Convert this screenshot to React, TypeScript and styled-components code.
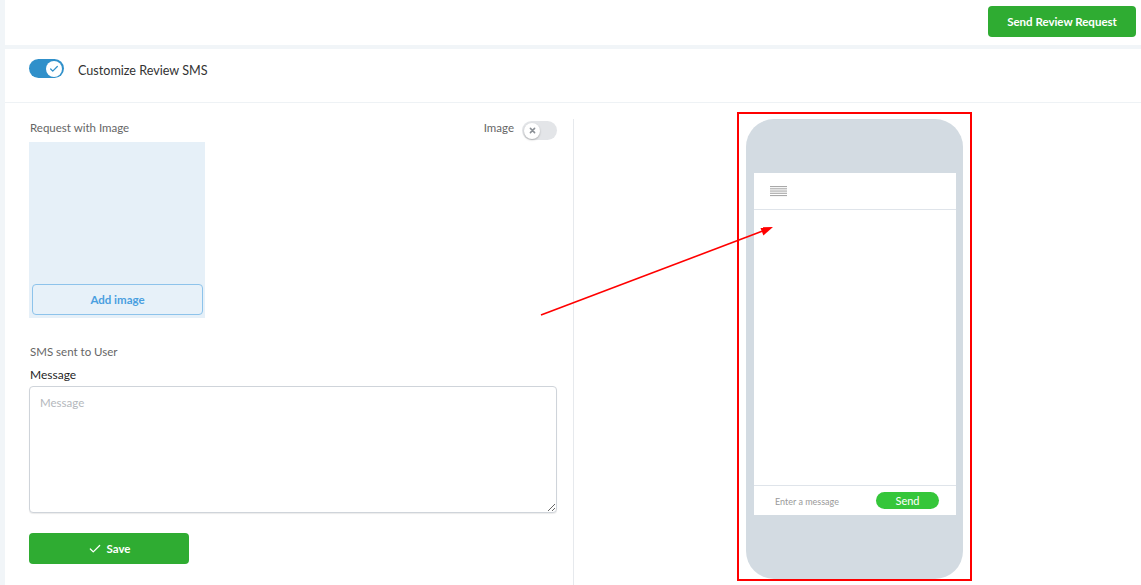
import React from "react";
import styled, { createGlobalStyle } from "styled-components";

const GlobalStyle = createGlobalStyle`
  html, body { margin: 0; padding: 0; }
  body {
    background: #f1f5f8;
    font-family: Lato, "Open Sans", Arial, sans-serif;
    color: #333;
  }
  * { box-sizing: border-box; }
`;

const Page = styled.div`
  position: relative;
  height: 585px;
  padding-left: 5px;
  display: flex;
  flex-direction: column;
  gap: 4px;
  overflow: hidden;
`;

const TopBar = styled.div`
  height: 45px;
  flex: none;
  background: #fff;
  display: flex;
  justify-content: flex-end;
  align-items: flex-start;
  padding: 6px 5px 0 0;
`;

const GreenButton = styled.button<{ $w: number }>`
  width: ${(p) => p.$w}px;
  height: 31px;
  border: none;
  border-radius: 4px;
  background: #2fac32;
  color: #fff;
  font-family: Lato, "Open Sans", sans-serif;
  font-weight: 700;
  font-size: 11.5px;
  display: flex;
  align-items: center;
  justify-content: center;
  gap: 5px;
  cursor: pointer;
  padding: 0;
`;

const Card = styled.div`
  flex: 1;
  background: #fff;
  display: flex;
  flex-direction: column;
`;

const CardHeader = styled.div`
  height: 54px;
  flex: none;
  display: flex;
  align-items: center;
  gap: 14px;
  padding: 0 0 14px 24px;
  border-bottom: 1px solid #eef2f5;
`;

const HeaderTitle = styled.span`
  font-size: 12.6px;
  color: #333;
  padding-top: 3px;
`;

const Switch = styled.div<{ $on: boolean }>`
  width: 35px;
  height: 19px;
  border-radius: 10px;
  background: ${(p) => (p.$on ? "#3090ca" : "#e3e5e8")};
  display: flex;
  align-items: center;
  justify-content: ${(p) => (p.$on ? "flex-end" : "flex-start")};
  padding: 0 2px;
  flex: none;
`;

const Knob = styled.div<{ $on: boolean }>`
  width: 16px;
  height: 16px;
  border-radius: 50%;
  background: #fff;
  display: flex;
  align-items: center;
  justify-content: center;
  box-shadow: ${(p) => (p.$on ? "none" : "0 1px 2px rgba(0,0,0,0.25)")};
`;

const CardBody = styled.div`
  flex: 1;
  display: flex;
`;

const LeftCol = styled.div`
  width: 569px;
  flex: none;
  margin-top: 16px;
  padding: 2px 16px 0 24px;
  border-right: 1px solid #e6e9ed;
  display: flex;
  flex-direction: column;
`;

const TopRow = styled.div`
  display: flex;
  justify-content: space-between;
  align-items: flex-start;
  height: 19px;
`;

const SmallLabel = styled.span`
  font-size: 11.5px;
  line-height: 13px;
  color: #666;
  padding-left: 1px;
`;

const ImageToggleGroup = styled.div`
  display: flex;
  align-items: flex-start;
  gap: 8px;
`;

const ImageBox = styled.div`
  margin-top: 2px;
  width: 176px;
  height: 176px;
  background: #e6f0f8;
  display: flex;
  align-items: flex-end;
  padding: 0 2px 3px 3px;
`;

const AddImageButton = styled.button`
  width: 100%;
  height: 31px;
  border: 1px solid #8dc3eb;
  border-radius: 4px;
  background: #e7f1f9;
  color: #4a9fe0;
  font-family: Lato, "Open Sans", sans-serif;
  font-weight: 700;
  font-size: 11.5px;
  padding: 0;
`;

const SectionLabel = styled.div<{ $mt: number; $dark?: boolean }>`
  margin-top: ${(p) => p.$mt}px;
  font-size: ${(p) => (p.$dark ? 12 : 11.5)}px;
  line-height: 14px;
  color: ${(p) => (p.$dark ? "#1f1f1f" : "#666")};
  padding-left: 1px;
`;

const MessageArea = styled.textarea`
  margin-top: 4px;
  width: 100%;
  height: 127px;
  border: 1px solid #cfd4da;
  border-radius: 4px;
  box-shadow: 0 1px 1px rgba(0, 0, 0, 0.08);
  padding: 9px 10px;
  font-family: Lato, "Open Sans", sans-serif;
  font-size: 11.5px;
  color: #333;
  resize: vertical;
  outline: none;
  &::placeholder { color: #b4b8bd; }
`;

const SaveWrap = styled.div`
  margin-top: 20px;
`;

const RightCol = styled.div`
  flex: 1;
  display: flex;
  justify-content: center;
  align-items: flex-start;
  padding: 9px 6px 0 0;
`;

const Highlight = styled.div`
  border: 2px solid #ff0000;
  padding: 5px 7px 0 7px;
`;

const Phone = styled.div`
  width: 217px;
  height: 460px;
  background: #d3dbe2;
  border-radius: 28px;
  padding: 54px 7px 0 8px;
`;

const Screen = styled.div`
  height: 342px;
  background: #fff;
  display: flex;
  flex-direction: column;
`;

const ScreenHeader = styled.div`
  height: 37px;
  border-bottom: 1px solid #dfe4ea;
  display: flex;
  align-items: center;
  padding: 0 0 0 16px;
`;

const ScreenBody = styled.div`
  flex: 1;
`;

const ScreenFooter = styled.div`
  height: 30px;
  border-top: 1px solid #dfe4ea;
  display: flex;
  align-items: center;
  padding: 0 17px 0 21px;
  justify-content: space-between;
`;

const FakeInput = styled.span`
  font-size: 9px;
  color: #9a9a9a;
  padding-top: 1px;
`;

const SendPill = styled.span`
  width: 63px;
  height: 17px;
  border-radius: 9px;
  background: #35c63a;
  color: #fff;
  font-size: 11px;
  display: flex;
  align-items: center;
  justify-content: center;
`;

const Annotation = styled.svg`
  position: absolute;
  left: 0;
  top: 0;
  pointer-events: none;
`;

const CheckMark = ({ color, size, w }: { color: string; size: number; w: number }) => (
  <svg width={size} height={size} viewBox="0 0 24 24" fill="none" stroke={color} strokeWidth={w} strokeLinecap="round" strokeLinejoin="round">
    <path d="M20 6 9 17l-5-5" />
  </svg>
);

const Cross = () => (
  <svg width="7" height="7" viewBox="0 0 10 10" stroke="#8a8f95" strokeWidth="2.2" strokeLinecap="round">
    <path d="M2 2l6 6M8 2l-6 6" />
  </svg>
);

const Hamburger = () => (
  <svg width="17" height="11" viewBox="0 0 17 11">
    {[0.5, 2.75, 5, 7.25, 9.5].map((y) => (
      <rect key={y} x="0" y={y - 0.5} width="17" height="1.1" fill="#a9a9a9" />
    ))}
  </svg>
);

export default function App() {
  return (
    <>
      <GlobalStyle />
      <Page>
        <TopBar>
          <GreenButton $w={148}>Send Review Request</GreenButton>
        </TopBar>
        <Card>
          <CardHeader>
            <Switch $on>
              <Knob $on>
                <CheckMark color="#3090ca" size={10} w={3} />
              </Knob>
            </Switch>
            <HeaderTitle>Customize Review SMS</HeaderTitle>
          </CardHeader>
          <CardBody>
            <LeftCol>
              <TopRow>
                <SmallLabel>Request with Image</SmallLabel>
                <ImageToggleGroup>
                  <SmallLabel>Image</SmallLabel>
                  <Switch $on={false}>
                    <Knob $on={false}>
                      <Cross />
                    </Knob>
                  </Switch>
                </ImageToggleGroup>
              </TopRow>
              <ImageBox>
                <AddImageButton>Add image</AddImageButton>
              </ImageBox>
              <SectionLabel $mt={27}>SMS sent to User</SectionLabel>
              <SectionLabel $mt={9} $dark>
                Message
              </SectionLabel>
              <MessageArea placeholder="Message" />
              <SaveWrap>
                <GreenButton $w={160}>
                  <CheckMark color="#fff" size={14} w={2.2} />
                  Save
                </GreenButton>
              </SaveWrap>
            </LeftCol>
            <RightCol>
              <Highlight>
                <Phone>
                  <Screen>
                    <ScreenHeader>
                      <Hamburger />
                    </ScreenHeader>
                    <ScreenBody />
                    <ScreenFooter>
                      <FakeInput>Enter a message</FakeInput>
                      <SendPill>Send</SendPill>
                    </ScreenFooter>
                  </Screen>
                </Phone>
              </Highlight>
            </RightCol>
          </CardBody>
        </Card>
        <Annotation width="1141" height="585" viewBox="0 0 1141 585">
          <line x1="541" y1="315" x2="762" y2="231.3" stroke="#ff0000" strokeWidth="1.6" />
          <polygon points="773,227 763.4,235.4 760.2,227.2" fill="#ff0000" />
        </Annotation>
      </Page>
    </>
  );
}
